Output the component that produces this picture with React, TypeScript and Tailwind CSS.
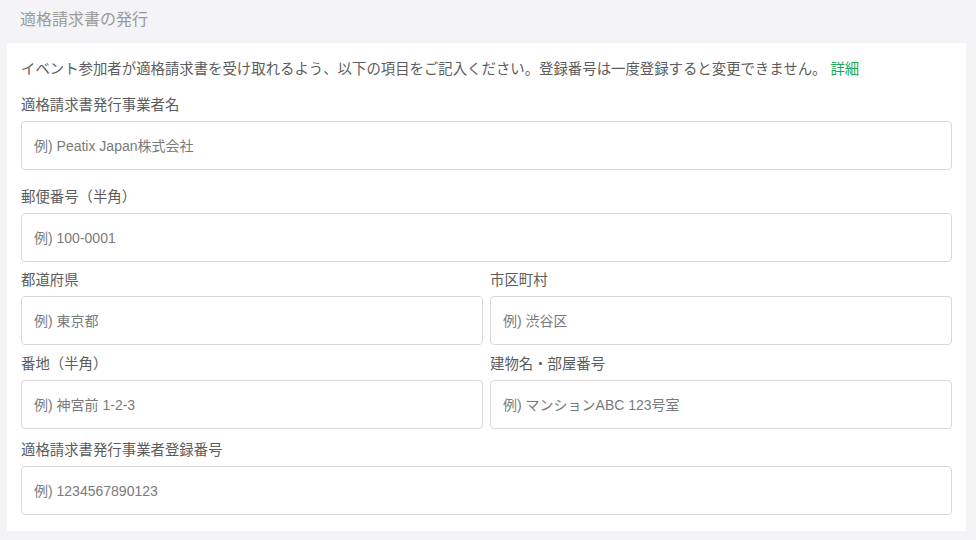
const font = { fontFamily: '"Liberation Sans", "Noto Sans CJK JP", sans-serif' };

function Field({ label, placeholder, className = '' }: { label: string; placeholder: string; className?: string }) {
  return (
    <div className={className}>
      <label className="block text-[14.4px] leading-[20px] text-[#5c5c5c] mb-[6px]">{label}</label>
      <input
        type="text"
        placeholder={placeholder}
        className="block w-full h-[49px] px-[12px] rounded-[4px] border border-[#d8d8d8] bg-white text-[14px] text-[#333333] placeholder:text-[#7a7a7a] outline-none"
      />
    </div>
  );
}

export default function App() {
  return (
    <div className="min-h-[540px] w-full bg-[#f4f4f6]" style={font}>
      <div className="h-[43px] pl-[20px] pt-[9px] text-[16px] leading-[22px] text-[#9b9b9b]">適格請求書の発行</div>
      <div className="ml-[7px] mr-[10px] bg-white px-[14px] pt-[16px] pb-[16px]">
        <p className="text-[14.4px] leading-[20px] text-[#5c5c5c] whitespace-nowrap">
          イベント参加者が適格請求書を受け取れるよう、以下の項目をご記入ください。登録番号は一度登録すると変更できません。
          <a className="ml-[4px] text-[#25a84a]">詳細</a>
        </p>
        <Field className="mt-[16px]" label="適格請求書発行事業者名" placeholder="例) Peatix Japan株式会社" />
        <Field className="mt-[17px]" label="郵便番号（半角）" placeholder="例) 100-0001" />
        <div className="grid grid-cols-2 gap-x-[7px] mt-[8px]">
          <Field label="都道府県" placeholder="例) 東京都" />
          <Field label="市区町村" placeholder="例) 渋谷区" />
        </div>
        <div className="grid grid-cols-2 gap-x-[7px] mt-[9px]">
          <Field label="番地（半角）" placeholder="例) 神宮前 1-2-3" />
          <Field label="建物名・部屋番号" placeholder="例) マンションABC 123号室" />
        </div>
        <Field className="mt-[11px]" label="適格請求書発行事業者登録番号" placeholder="例) 1234567890123" />
      </div>
    </div>
  );
}
